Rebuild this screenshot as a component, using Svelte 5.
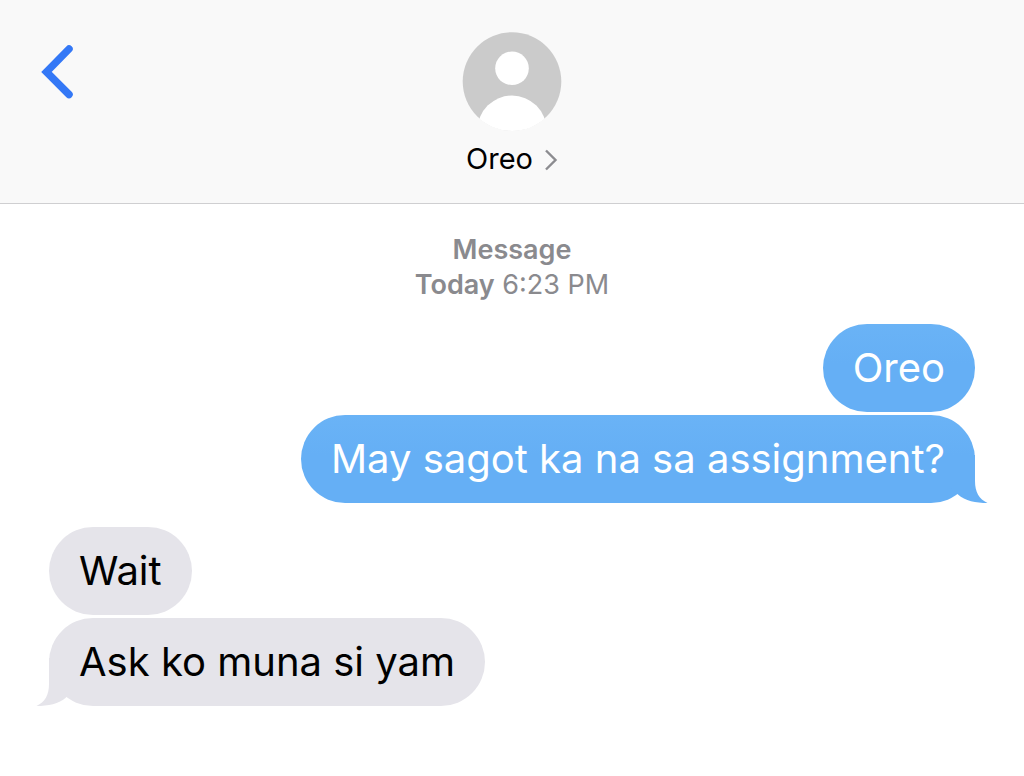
<script>
  const groups = [
    { side: 'sent', messages: ['Oreo', 'May sagot ka na sa assignment?'] },
    { side: 'received', messages: ['Wait', 'Ask ko muna si yam'] }
  ];
</script>

<div class="screen">
  <header>
    <button class="back" aria-label="Back">
      <svg width="34" height="56" viewBox="0 0 34 56"><path d="M29 5 6.5 28 29 50.5" /></svg>
    </button>
    <a class="contact" href="#contact">
      <svg class="avatar" width="100" height="100" viewBox="0 0 100 100" aria-hidden="true">
        <defs><clipPath id="disc"><circle cx="50" cy="50" r="50" /></clipPath></defs>
        <circle cx="50" cy="50.5" r="49.3" fill="#cbcbcb" />
        <g clip-path="url(#disc)" fill="#fff">
          <circle cx="50" cy="37.3" r="16.8" />
          <ellipse cx="50" cy="99" rx="34.5" ry="34.5" />
        </g>
      </svg>
      <span class="name">Oreo
        <svg width="14" height="22" viewBox="0 0 14 22" aria-hidden="true"><path d="M2 1.5 11.5 11 2 20.5" /></svg>
      </span>
    </a>
  </header>

  <main>
    <p class="stamp"><b>Message</b><br /><b>Today</b> 6:23 PM</p>
    {#each groups as group}
      <section class={group.side}>
        {#each group.messages as message, i}
          <div class="bubble">
            {message}
            {#if i === group.messages.length - 1}
              <svg class="tail" width="40" height="48" viewBox="0 0 40 48" aria-hidden="true">
                <path d="M0 0H27V26C27 37 31 44 39.5 48C28 48 17 46 10 39.5L0 30Z" />
              </svg>
            {/if}
          </div>
        {/each}
      </section>
    {/each}
  </main>
</div>

<style>
  :global(body) { margin: 0; background: #fff; }
  .screen { font-family: Inter, "Liberation Sans", sans-serif; color: #000; }
  header {
    display: grid;
    grid-template-columns: 1fr auto 1fr;
    align-items: start;
    padding: 31px 40px 26px;
    background: #f9f9f9;
    border-bottom: 1px solid #cfcfd1;
  }
  .back { justify-self: start; margin-top: 13px; padding: 0; border: 0; background: none; line-height: 0; cursor: pointer; }
  .back path { fill: none; stroke: #3478f6; stroke-width: 7.5; stroke-linecap: round; stroke-linejoin: miter; }
  .contact { display: flex; flex-direction: column; align-items: center; color: inherit; text-decoration: none; }
  .avatar { display: block; }
  .name { display: flex; align-items: center; gap: 11px; margin-top: 10px; font-size: 29px; line-height: 36px; }
  .name svg { margin-top: 2px; }
  .name path { fill: none; stroke: #8c8c90; stroke-width: 2.4; }
  .stamp { margin: 0 0 22px; text-align: center; color: #8a8a8e; font-size: 27px; line-height: 35px; }
  .stamp b { font-weight: 600; }
  main { padding: 28px 49px; }
  section { display: flex; flex-direction: column; gap: 3px; margin-bottom: 24px; }
  .bubble {
    position: relative;
    padding: 20px 30px;
    border-radius: 44px;
    font-size: 40px;
    line-height: 48px;
  }
  .sent { align-items: flex-end; }
  .sent .bubble { background: linear-gradient(#6ab3f6, #65aff5 45%); color: #fff; }
  .sent .tail { fill: #65aff5; }
  .received { align-items: flex-start; }
  .received .bubble { background: #e5e4ea; }
  .received .tail { fill: #e5e4ea; }
  .tail { position: absolute; bottom: 0; }
  .sent .tail { right: -13px; }
  .received .tail { left: -13px; transform: scaleX(-1); }
</style>
